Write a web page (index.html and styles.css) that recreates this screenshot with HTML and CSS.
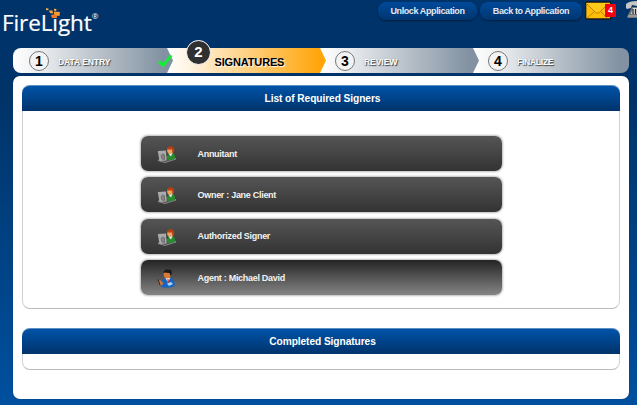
FILE: index.html
```
<!DOCTYPE html>
<html lang="en">
<head>
<meta charset="utf-8">
<title>FireLight</title>
<link rel="stylesheet" href="styles.css">
</head>
<body>
<svg class="defs" width="0" height="0" aria-hidden="true">
  <symbol id="client" viewBox="0 0 20 17">
    <path d="M1 14.500 8 16.500 19 13 17 11 6 11Z" fill="#555" stroke="#999" stroke-width=".8"/>
    <path d="M10 13Q10 6.500 14 6.500Q18 6.500 18.200 12Q15 15.500 10 13.500Z" fill="#2a8a2f"/>
    <path d="M11.500 7.500 14 10.500 15.500 7Z" fill="#eee"/>
    <circle cx="13.400" cy="4.400" r="3.200" fill="#f0a060"/>
    <path d="M10 3.500Q10.500 .2 14 .3Q17.700 .8 17.200 5L15.500 7.500 15 3.500Z" fill="#b8400f"/>
    <path d="M.8 5 9 4.500 9.500 14.500 2.500 15Z" fill="#aaa"/>
    <path d="M4 9.500Q6 6.500 7.500 9L7.500 13.500 5 13Z" fill="#858585" stroke="#666" stroke-width=".8"/>
  </symbol>
  <symbol id="agent" viewBox="0 0 20 19">
    <path d="M4 18Q3 10 9 9L14 9Q18 10 17.500 17Q12 20 4 18Z" fill="#1764be"/>
    <path d="M8.500 9 11 13.500 13 9Z" fill="#fff"/>
    <path d="M10.500 10 11.500 10 12 14 10.500 13Z" fill="#c52b20"/>
    <path d="M6.500 5Q7 2 11 2Q14 2 14 6Q13 10 9.500 9.500Q7 9 6.500 5Z" fill="#d87a37"/>
    <path d="M6 3.500 8.500 .4 14 .8Q15.800 4 13.500 7L12.500 4Z" fill="#191919"/>
    <path d="M1 12.500 3 11 6.500 14 5 16.500 2 15.500Z" fill="#cf743a"/>
    <path d="M1 10.500 3 16" stroke="#222" stroke-width="1"/>
    <path d="M10 14.500 14 13 16 15 12 17Z" fill="#a9d4fa"/>
  </symbol>
</svg>

<header class="topbar">
  <div class="logo">
    <span class="wordmark">FireLight</span><span class="reg">®</span>
    <svg class="sparks" width="15" height="11" viewBox="0 0 15 11">
      <path d="M8 3.500 14 4 13.500 8 8 7.500Z" fill="#f79a31"/>
      <path d="M5 7 10 6 11 10 6 10Z" fill="#ef7c2d"/>
      <path d="M3 2.500 6.500 2.500 7 5.500 4 5Z" fill="#f8a63c"/>
      <path d="M0 .3 2.500 .5 2.300 2.300 0 2Z" fill="#ffb23f"/>
      <path d="M8 .8 10.500 1 10 3 8 2.500Z" fill="#ffb23f"/>
    </svg>
  </div>
  <nav class="actions">
    <a class="pill pill-unlock">Unlock Application</a>
    <a class="pill pill-back">Back to Application</a>
    <div class="mail">
      <svg width="27" height="19" viewBox="0 0 27 19">
        <rect x=".7" y="1" width="25" height="17" rx="1" fill="#ffbd09" stroke="#17191d" stroke-width="1.300"/>
        <path d="M1.500 2H22L12 12Z" fill="#ffc91b"/>
        <path d="M2 3 10.500 11.500Q12.500 13 14.500 11.500L20 6M2 17 9 11M22 17 16 11" fill="none" stroke="#a77a08" stroke-width=".8"/>
      </svg>
      <span class="count">4</span>
    </div>
    <svg class="phone" width="11" height="18" viewBox="0 0 11 18">
      <path d="M0 7V3Q3 0 11 0V5L6 4 5 7 1 8Z" fill="#c5c5c5"/>
      <path d="M1 16 6 6H11V17H2Z" fill="#777"/>
      <path d="M5 13 7 7H11V13Z" fill="#ddd"/>
      <path d="M7 8V13M9.500 8V13" stroke="#222" stroke-width="1.200"/>
      <path d="M2 15H11" stroke="#bbb"/>
    </svg>
  </nav>
</header>

<ol class="steps">
  <li class="step step-1"><span class="num">1</span><span class="label">DATA ENTRY</span></li>
  <li class="step step-2"><span class="label">SIGNATURES</span></li>
  <li class="step step-3"><span class="num">3</span><span class="label">REVIEW</span></li>
  <li class="step step-4"><span class="num">4</span><span class="label">FINALIZE</span></li>
  <li class="current-num">2</li>
  <li class="check"><svg width="16" height="14" viewBox="0 0 16 14"><path d="M.5 8.500 3.500 6.500 6 9 13 .8 15.500 2 6.500 13.500Z" fill="#12ee36"/></svg></li>
</ol>

<main class="sheet">
  <section class="panel required">
    <h2>List of Required Signers</h2>
    <ul class="signers">
      <li><svg width="20" height="17"><use href="#client"/></svg><span>Annuitant</span></li>
      <li><svg width="20" height="17"><use href="#client"/></svg><span>Owner : Jane Client</span></li>
      <li><svg width="20" height="17"><use href="#client"/></svg><span>Authorized Signer</span></li>
      <li class="active"><svg width="20" height="19"><use href="#agent"/></svg><span>Agent : Michael David</span></li>
    </ul>
  </section>
  <section class="panel completed">
    <h2>Completed Signatures</h2>
  </section>
</main>
</body>
</html>
```
FILE: styles.css
```
* { box-sizing: border-box; }
html { height: 100%; background: linear-gradient(#00336a, #003469 25%, #00509f); }
body {
  margin: 0;
  height: 405px;
  overflow: hidden;
  font-family: "Liberation Sans", Arial, sans-serif;
}
.defs { position: absolute; }
ul, ol { list-style: none; margin: 0; padding: 0; }

.topbar { display: flex; justify-content: space-between; height: 48px; }
.logo {
  position: relative;
  display: flex;
  padding: 6px 0 0 2px;
  color: #fff;
  font-family: "Open Sans", sans-serif;
}
.wordmark { font-size: 22.500px; line-height: 34px; letter-spacing: -0.100px; -webkit-text-stroke: .2px #fff; }
.reg { font-size: 8px; line-height: 20px; }
.sparks { position: absolute; left: 46px; top: 8px; }

.actions { display: flex; align-items: flex-start; }
.pill {
  height: 18px;
  margin-top: 2px;
  border-radius: 8px;
  background: linear-gradient(#00499a, #00366f);
  box-shadow: 0 1px 2px rgba(0, 15, 45, .65);
  color: #e4e9f0;
  font-size: 9px;
  font-weight: bold;
  letter-spacing: -0.390px;
  line-height: 18px;
  text-align: center;
}
.pill-unlock { width: 99px; margin-right: 3px; }
.pill-back { width: 102px; margin-right: 3px; }
.mail { position: relative; width: 32px; height: 20px; margin: 1px 9px 0 0; }
.mail svg { display: block; }
.count {
  position: absolute;
  left: 20px;
  top: 3px;
  width: 11px;
  height: 13px;
  background: #f60012;
  color: #fff;
  font-size: 9px;
  font-weight: bold;
  line-height: 13px;
  text-align: center;
}
.phone { margin-top: 1px; }

.steps { position: relative; display: flex; width: 616px; height: 25px; margin-left: 13px; }
.step {
  position: relative;
  display: flex;
  align-items: center;
  height: 25px;
  margin-left: -6px;
  background: linear-gradient(90deg, #fff, #f2f3f4 12%, #8292a2 94%);
  clip-path: polygon(0 0, calc(100% - 6px) 0, 100% 50%, calc(100% - 6px) 100%, 0 100%);
}
.step-1 { z-index: 4; width: 160px; margin-left: 0; padding-left: 16px; border-radius: 8px 0 0 8px; }
.step-2 { z-index: 3; width: 159px; padding-left: 47.500px; background: linear-gradient(90deg, #fff, #fff2de 15%, #ffa50a 96%); }
.step-3 { z-index: 2; width: 159px; padding-left: 15px; }
.step-4 { z-index: 1; width: 156px; padding-left: 15px; border-radius: 0 8px 8px 0; clip-path: none; }
.num {
  width: 20px;
  height: 20px;
  border: 1px solid #777;
  border-radius: 50%;
  background: #f3f3f3;
  color: #000;
  font-size: 14px;
  font-weight: bold;
  line-height: 18px;
  text-align: center;
}
.label {
  margin: 2px 0 0 9px;
  color: #fff;
  font-size: 8.600px;
  font-weight: bold;
  letter-spacing: -0.100px;
  text-shadow: 1px 1px 1px #444, 0 0 1px #999;
  white-space: nowrap;
}
.step-2 .label { margin: 3px 0 0; color: #000; font-size: 11px; letter-spacing: -0.150px; text-shadow: 1px 1px 1px #fff; }
.step-4 .label { letter-spacing: -0.300px; }
.check { position: absolute; z-index: 5; left: 144px; top: 6px; height: 14px; }
.check svg { display: block; }
.current-num {
  position: absolute;
  z-index: 5;
  left: 173px;
  top: -8px;
  width: 25px;
  height: 25px;
  border: 1.500px solid #fff;
  border-radius: 50%;
  background: #303030;
  color: #fff;
  font-size: 15px;
  font-weight: bold;
  line-height: 22px;
  text-align: center;
}

.sheet {
  width: 616px;
  height: 323px;
  margin: 3px 0 0 13px;
  padding: 9px;
  border-radius: 7px;
  background: #fff;
  box-shadow: 0 0 1px #002b5c;
}
.panel {
  border: 1px solid #d0d0d0;
  border-top: 0;
  border-bottom-color: #bbb;
  border-radius: 8px;
  background: #fff;
}
.required { height: 224px; margin-bottom: 19px; }
.completed { height: 42px; }
.panel h2 {
  height: 26px;
  margin: 0 -1px;
  border-radius: 8px 8px 0 0;
  border-top: 1px solid #5e8ec3;
  background: linear-gradient(#0053a8, #00336b);
  color: #fff;
  font-size: 10.200px;
  letter-spacing: -0.080px;
  line-height: 25px;
  padding-left: 3px;
  text-align: center;
}
.signers { display: flex; flex-direction: column; gap: 6.400px; width: 361px; margin: 25px auto 0 118px; }
.signers li {
  display: flex;
  align-items: center;
  height: 35px;
  padding: 2px 0 0 16px;
  border-radius: 7px;
  background: linear-gradient(#555, #333);
  box-shadow: 0 0 2px 1px #bbb;
  color: #f2f2f2;
  font-size: 9px;
  font-weight: bold;
  letter-spacing: -0.290px;
}
.signers span { margin: -2px 0 0 20.500px; }
.signers .active { background: linear-gradient(#242424, #858585); }
```
